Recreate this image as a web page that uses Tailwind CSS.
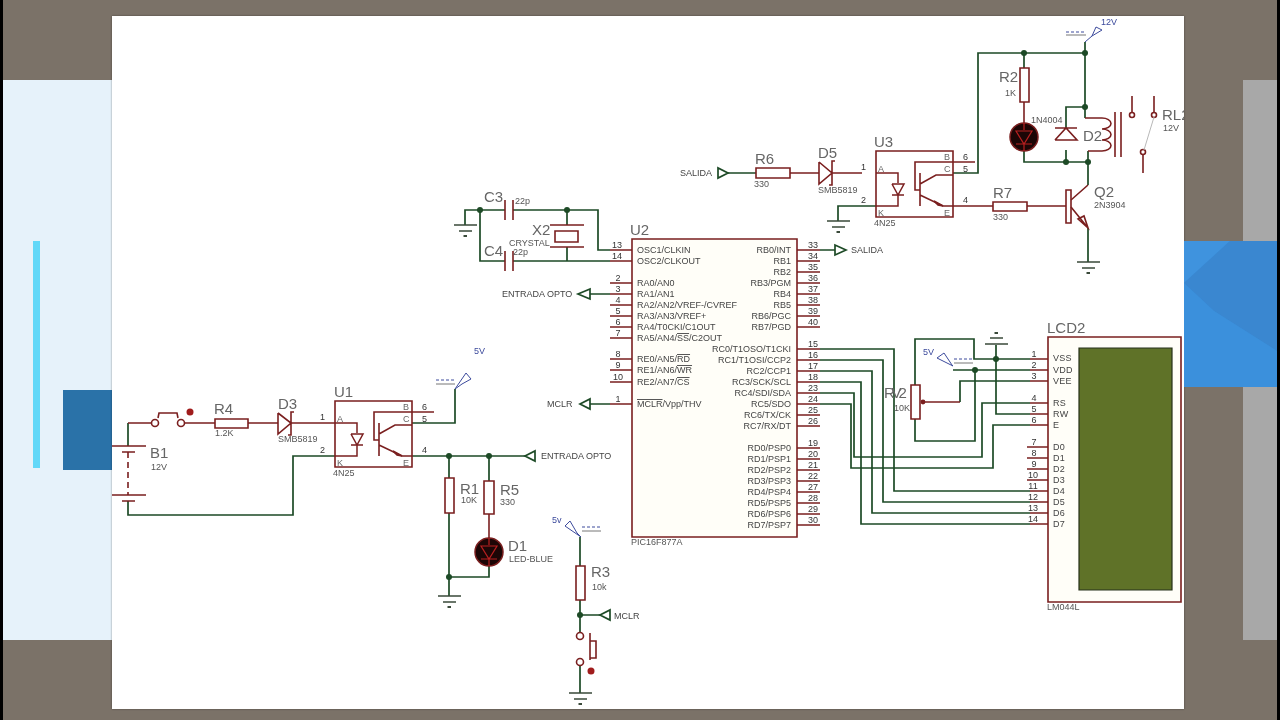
<!DOCTYPE html>
<html lang="en">
<head>
  <meta charset="UTF-8" />
  <title>PIC16F877A schematic</title>
  <script src="https://cdn.jsdelivr.net/npm/@tailwindcss/browser@4"></script>
</head>
<body class="bg-[#7b7268]">
<div class="w-[1280px] h-[720px] flex overflow-hidden bg-[#7b7268] font-['Liberation_Sans',Arial,sans-serif]">

  <div class="w-[3px] bg-black"></div>

  <!-- left slide strip -->
  <div class="w-[109px] my-[80px] bg-[#e6f2fa] flex items-start pl-[30px] pt-[161px]">
    <div class="w-[7px] h-[227px] bg-[#62d8f8]"></div>
    <div class="w-[49px] h-[80px] ml-[23px] mt-[149px] bg-[#2a72a8]"></div>
  </div>

  <!-- sheet -->
  <div class="w-[1072px] h-[693px] mt-[16px] bg-white shadow-[0_0_2px_rgba(0,0,0,0.4)]">
    <svg class="w-[1072px] h-[693px] blur-[0.35px]" viewBox="112 16 1072 693" fill="none">
      <defs>
        <g id="gnd" stroke="#3a4a3a" stroke-width="1.6">
          <path d="M-11 0H12M-6 6H7"/>
          <path d="M-1.500 11H2" stroke-width="2"/>
        </g>
        <circle id="dot" r="3" fill="#1d4a26"/>
        <g id="led">
          <circle r="14" fill="#1c0606" stroke="#7a1f1f" stroke-width="1.500"/>
          <path d="M0 -14V-7M0 7V14M-8 7H8M-8 -6H8L0 7Z" stroke="#b82020" stroke-width="1.200"/>
        </g>
        <g id="opto">
          <path d="M876 151H953V217H876Z" stroke="#7a1f1f" stroke-width="1.600"/>
          <path d="M876 173H898V183M898 195V206H876M892 195H904M892 184H904L898 195L892 184" stroke="#7a1f1f" stroke-width="1.500"/>
          <path d="M953 162H915V190H920M920 173V206M920 184L936 175H953M920 195L943 206H953" stroke="#7a1f1f" stroke-width="1.600"/>
          <path d="M934 201L943 206L938 205Z" stroke="#7a1f1f" stroke-width="1.500"/>
          <path d="M953 162H975" stroke="#7a1f1f" stroke-width="1.500"/>
          <g class="text-[9px] fill-[#666]">
            <text x="944" y="160">B</text><text x="944" y="172">C</text><text x="944" y="216">E</text>
            <text x="878" y="172">A</text><text x="878" y="216">K</text>
          </g>
          <g class="text-[9px] fill-[#333]">
            <text x="861" y="170">1</text><text x="861" y="203">2</text>
            <text x="963" y="160">6</text><text x="963" y="172">5</text><text x="963" y="203">4</text>
          </g>
        </g>
      </defs>

      <!-- green wires -->
      <g stroke="#1d4a26" stroke-width="1.700">
        <path d="M1085 42V118M1085 53H978V173H953M1024 53V68M1024 151V162H1088M1066 162V150M1066 128V107H1085M1088 151V185M1088 228V262"/>
        <path d="M728 173H756M838 221V206H876"/>
        <path d="M465 225V210H505M480 210V261H505M513 210H598V250H610M513 261H610M567 210V225M567 247V261"/>
        <path d="M590 294H610M590 404H610M820 250H836"/>
        <path d="M128 423V446M128 501V515H293V456H335M412 423H455V389M412 456H525M449 456V478M489 456V481M449 513V596M489 566V577H449"/>
        <path d="M580 537V566M580 600V632M580 615H600M580 666V693"/>
        <path d="M820 349H894V491H1030M820 360H883V502H1030M820 371H872V513H1030M820 382H861V524H1030"/>
        <path d="M820 393H854V457H982V403H1030M820 404H851V468H993V425H1030"/>
        <path d="M915 385V339H974V359H1030M996 345V414H1030M975 370V441H915V419M953 370H1030M960 402V381H1030"/>
      </g>

      <!-- maroon pins and parts -->
      <g stroke="#7a1f1f" stroke-width="1.600">
        <!-- U2 pins -->
        <path d="M610 250H632M610 261H632M610 283H632M610 294H632M610 305H632M610 316H632M610 327H632M610 338H632M610 359H632M610 370H632M610 382H632M610 404H632"/>
        <path d="M797 250H820M797 261H820M797 272H820M797 283H820M797 294H820M797 305H820M797 316H820M797 327H820"/>
        <path d="M797 349H820M797 360H820M797 371H820M797 382H820M797 393H820M797 404H820M797 415H820M797 426H820"/>
        <path d="M797 448H820M797 459H820M797 470H820M797 481H820M797 492H820M797 503H820M797 514H820M797 525H820"/>
        <path d="M632 239H797V537H632Z" fill="#fffef8"/>
        <!-- R6, D5 -->
        <path d="M790 173H819M832 173H862M819 162V184L832 173L819 162M835 161H832V185H829"/>
        <path d="M756 168H790V178H756Z"/>
        <!-- R2 and R7, R4 and the others -->
        <path d="M1020 68H1029V102H1020Z"/>
        <path d="M1024 102V123"/>
        <path d="M993 202H1027V211H993Z"/>
        <path d="M953 206H993M1027 206H1066"/>
        <path d="M1066 190H1071V223H1066Z"/>
        <path d="M1071 200L1088 185M1071 207L1088 228M1078 219L1088 228L1084 216Z"/>
        <path d="M1055 140H1077L1066 128L1055 140M1055 128H1077"/>
        <path d="M1085 118H1102a9 5.500 0 0 1 0 11a9 5.500 0 0 1 0 11a9 5.500 0 0 1 0 11H1088"/>
        <path d="M1115 112V157M1121 112V157M1132 96V112M1154 96V112M1143 155V173"/>
        <circle cx="1132" cy="115" r="2.500"/><circle cx="1154" cy="115" r="2.500"/><circle cx="1143" cy="152" r="2.500"/>
        <!-- left side -->
        <path d="M128 423H152M184 423H215M248 423H278M291 423H335"/>
        <circle cx="155" cy="423" r="3.500"/><circle cx="181" cy="423" r="3.500"/>
        <path d="M158 418L159 413H177L178 418"/>
        <path d="M215 419H248V428H215Z"/>
        <path d="M278 413V434L291 423L278 413M294 412H291V435H288"/>
        <path d="M112 446H146M122 452H135M112 495H146M122 501H135"/>
        <path d="M128 452V495" stroke-dasharray="6 4"/>
        <path d="M445 478H454V513H445Z" fill="#fff"/>
        <path d="M484 481H494V514H484Z" fill="#fff"/>
        <path d="M489 514V538"/>
        <path d="M576 566H585V600H576Z" fill="#fff"/>
        <circle cx="580" cy="636" r="3.500"/><circle cx="580" cy="662" r="3.500"/>
        <path d="M590 633V660M590 641H596V658H590"/>
        <!-- caps and crystal -->
        <path d="M505 200V220M513 200V220M505 251V271M513 251V271"/>
        <path d="M550 225H584M550 247H584M555 231H578V242H555Z"/>
        <!-- pot -->
        <path d="M911 385H920V419H911Z" fill="#fff"/>
        <path d="M921 402H960"/>
        <circle cx="923" cy="402" r="1.600" fill="#7a1f1f"/>
        <!-- LCD pins -->
        <path d="M1030 359H1048M1030 370H1048M1030 381H1048M1030 403H1048M1030 414H1048M1030 425H1048M1027 447H1048M1027 458H1048M1027 469H1048M1027 480H1048M1030 491H1048M1030 502H1048M1030 513H1048M1030 524H1048"/>
        <path d="M1048 337H1181V602H1048Z" fill="#fffef8"/>
      </g>
      <path d="M1154 117L1144 150" stroke="#b8b8b8"/>
      <path d="M1079 348H1172V590H1079Z" fill="#5f7228" stroke="#26301a" stroke-width="1.200"/>

      <!-- terminals -->
      <g stroke="#1d4a26" stroke-width="1.700" fill="#fff">
        <path d="M718 168V178L728 173Z"/>
        <path d="M835 245V255L846 250Z"/>
        <path d="M590 289V299L578 294Z"/>
        <path d="M590 399V409L580 404Z"/>
        <path d="M535 451V461L525 456Z"/>
        <path d="M610 610V620L600 615Z"/>
      </g>

      <!-- power probes -->
      <g stroke="#3c4a9c" fill="#fff">
        <path d="M1085 42L1092 36M1092 36L1102 30L1096 27Z"/>
        <path d="M455 389L462 384L471 379L466 373Z"/>
        <path d="M581 537L577 533L570 521L565 526Z"/>
        <path d="M953 366L952 365L944 353L937 358Z"/>
      </g>
      <g stroke="#3c4a9c" stroke-dasharray="3 2">
        <path d="M1066 32H1086M436 380H455M582 527H601M954 359H973"/>
      </g>
      <g stroke="#777">
        <path d="M1066 35H1086M436 384H455M582 531H601M954 363H973"/>
      </g>

      <!-- reused parts -->
      <use href="#opto"/>
      <use href="#opto" transform="translate(-541 250)"/>
      <use href="#led" x="1024" y="137"/>
      <use href="#led" x="489" y="552"/>
      <use href="#gnd" x="838" y="221"/>
      <use href="#gnd" x="1088" y="262"/>
      <use href="#gnd" x="465" y="225"/>
      <use href="#gnd" x="449" y="596"/>
      <use href="#gnd" x="580" y="693"/>
      <use href="#gnd" transform="translate(996 344) scale(1 -1)"/>

      <use href="#dot" x="1024" y="53"/><use href="#dot" x="1085" y="53"/><use href="#dot" x="1085" y="107"/>
      <use href="#dot" x="1066" y="162"/><use href="#dot" x="1088" y="162"/>
      <use href="#dot" x="480" y="210"/><use href="#dot" x="567" y="210"/>
      <use href="#dot" x="449" y="456"/><use href="#dot" x="489" y="456"/><use href="#dot" x="449" y="577"/>
      <use href="#dot" x="580" y="615"/><use href="#dot" x="996" y="359"/><use href="#dot" x="975" y="370"/>

      <circle cx="190" cy="412" r="3.500" fill="#a01c1c"/>
      <circle cx="591" cy="671" r="3.500" fill="#a01c1c"/>

      <!-- part names -->
      <g class="text-[15px] fill-[#666]">
        <text x="630" y="235">U2</text><text x="874" y="147">U3</text><text x="334" y="397">U1</text>
        <text x="755" y="164">R6</text><text x="818" y="158">D5</text><text x="999" y="82">R2</text>
        <text x="1083" y="141">D2</text><text x="1162" y="120">RL2</text><text x="993" y="198">R7</text>
        <text x="1094" y="197">Q2</text><text x="484" y="202">C3</text><text x="484" y="256">C4</text>
        <text x="532" y="235">X2</text><text x="214" y="414">R4</text><text x="278" y="409">D3</text>
        <text x="150" y="458">B1</text><text x="460" y="494">R1</text><text x="500" y="495">R5</text>
        <text x="508" y="551">D1</text><text x="591" y="577">R3</text>
        <text class="tracking-[-3px]" x="884" y="398">RV2</text>
        <text x="1047" y="333">LCD2</text>
      </g>

      <!-- part values -->
      <g class="text-[9px] fill-[#555]">
        <text x="754" y="187">330</text><text x="818" y="193">SMB5819</text><text x="1005" y="96">1K</text>
        <text x="1031" y="123">1N4004</text><text x="1163" y="131">12V</text><text x="993" y="220">330</text>
        <text x="1094" y="208">2N3904</text><text x="874" y="226">4N25</text><text x="515" y="204">22p</text>
        <text x="513" y="255">22p</text><text x="509" y="246">CRYSTAL</text><text x="215" y="436">1.2K</text>
        <text x="278" y="442">SMB5819</text><text x="333" y="476">4N25</text><text x="151" y="470">12V</text>
        <text x="461" y="503">10K</text><text x="500" y="505">330</text><text x="509" y="562">LED-BLUE</text>
        <text x="592" y="590">10k</text><text x="894" y="411">10K</text><text x="631" y="545">PIC16F877A</text>
        <text x="1047" y="610">LM044L</text>
      </g>

      <!-- terminal names -->
      <g class="text-[9px] fill-[#444]">
        <text x="680" y="176">SALIDA</text><text x="851" y="253">SALIDA</text>
        <text x="502" y="297">ENTRADA OPTO</text><text x="541" y="459">ENTRADA OPTO</text>
        <text x="547" y="407">MCLR</text><text x="614" y="619">MCLR</text>
      </g>
      <g class="text-[9px] fill-[#3c4a9c]">
        <text x="1101" y="25">12V</text><text x="474" y="354">5V</text><text x="552" y="523">5v</text><text x="923" y="355">5V</text>
      </g>

      <!-- U2 left labels -->
      <g class="text-[9px] fill-[#444]">
        <text x="637" y="253">OSC1/CLKIN</text><text x="637" y="264">OSC2/CLKOUT</text>
        <text x="637" y="286">RA0/AN0</text><text x="637" y="297">RA1/AN1</text>
        <text x="637" y="308">RA2/AN2/VREF-/CVREF</text><text x="637" y="319">RA3/AN3/VREF+</text>
        <text x="637" y="330">RA4/T0CKI/C1OUT</text>
        <text x="637" y="341">RA5/AN4/<tspan text-decoration="overline">SS</tspan>/C2OUT</text>
        <text x="637" y="362">RE0/AN5/<tspan text-decoration="overline">RD</tspan></text>
        <text x="637" y="373">RE1/AN6/<tspan text-decoration="overline">WR</tspan></text>
        <text x="637" y="385">RE2/AN7/<tspan text-decoration="overline">CS</tspan></text>
        <text x="637" y="407"><tspan text-decoration="overline">MCLR</tspan>/Vpp/THV</text>
      </g>

      <!-- U2 right labels -->
      <g class="text-[9px] fill-[#444]" text-anchor="end">
        <text x="791" y="253">RB0/INT</text><text x="791" y="264">RB1</text><text x="791" y="275">RB2</text>
        <text x="791" y="286">RB3/PGM</text><text x="791" y="297">RB4</text><text x="791" y="308">RB5</text>
        <text x="791" y="319">RB6/PGC</text><text x="791" y="330">RB7/PGD</text>
        <text x="791" y="352">RC0/T1OSO/T1CKI</text><text x="791" y="363">RC1/T1OSI/CCP2</text>
        <text x="791" y="374">RC2/CCP1</text><text x="791" y="385">RC3/SCK/SCL</text>
        <text x="791" y="396">RC4/SDI/SDA</text><text x="791" y="407">RC5/SDO</text>
        <text x="791" y="418">RC6/TX/CK</text><text x="791" y="429">RC7/RX/DT</text>
        <text x="791" y="451">RD0/PSP0</text><text x="791" y="462">RD1/PSP1</text>
        <text x="791" y="473">RD2/PSP2</text><text x="791" y="484">RD3/PSP3</text>
        <text x="791" y="495">RD4/PSP4</text><text x="791" y="506">RD5/PSP5</text>
        <text x="791" y="517">RD6/PSP6</text><text x="791" y="528">RD7/PSP7</text>
      </g>

      <!-- U2 pin numbers -->
      <g class="text-[9px] fill-[#333]" text-anchor="middle">
        <text x="617" y="248">13</text><text x="617" y="259">14</text><text x="618" y="281">2</text>
        <text x="618" y="292">3</text><text x="618" y="303">4</text><text x="618" y="314">5</text>
        <text x="618" y="325">6</text><text x="618" y="336">7</text><text x="618" y="357">8</text>
        <text x="618" y="368">9</text><text x="618" y="380">10</text><text x="618" y="402">1</text>
        <text x="813" y="248">33</text><text x="813" y="259">34</text><text x="813" y="270">35</text>
        <text x="813" y="281">36</text><text x="813" y="292">37</text><text x="813" y="303">38</text>
        <text x="813" y="314">39</text><text x="813" y="325">40</text>
        <text x="813" y="347">15</text><text x="813" y="358">16</text><text x="813" y="369">17</text>
        <text x="813" y="380">18</text><text x="813" y="391">23</text><text x="813" y="402">24</text>
        <text x="813" y="413">25</text><text x="813" y="424">26</text>
        <text x="813" y="446">19</text><text x="813" y="457">20</text><text x="813" y="468">21</text>
        <text x="813" y="479">22</text><text x="813" y="490">27</text><text x="813" y="501">28</text>
        <text x="813" y="512">29</text><text x="813" y="523">30</text>
      </g>

      <!-- LCD labels -->
      <g class="text-[9px] fill-[#444] tracking-[0.3px]">
        <text x="1053" y="361">VSS</text><text x="1053" y="373">VDD</text><text x="1053" y="384">VEE</text>
        <text x="1053" y="406">RS</text><text x="1053" y="417">RW</text><text x="1053" y="428">E</text>
        <text x="1053" y="450">D0</text><text x="1053" y="461">D1</text><text x="1053" y="472">D2</text>
        <text x="1053" y="483">D3</text><text x="1053" y="494">D4</text><text x="1053" y="505">D5</text>
        <text x="1053" y="516">D6</text><text x="1053" y="527">D7</text>
      </g>
      <g class="text-[9px] fill-[#333]" text-anchor="middle">
        <text x="1034" y="357">1</text><text x="1034" y="368">2</text><text x="1034" y="379">3</text>
        <text x="1034" y="401">4</text><text x="1034" y="412">5</text><text x="1034" y="423">6</text>
        <text x="1034" y="445">7</text><text x="1034" y="456">8</text><text x="1034" y="467">9</text>
        <text x="1033" y="478">10</text><text x="1033" y="489">11</text><text x="1033" y="500">12</text>
        <text x="1033" y="511">13</text><text x="1033" y="522">14</text>
      </g>
    </svg>
  </div>

  <!-- right slide strip -->
  <div class="w-[93px] relative">
    <div class="w-[34px] h-[560px] ml-[59px] mt-[80px] bg-[#a8a8a8]"></div>
    <svg class="absolute left-0 top-[241px] w-[93px] h-[146px]" viewBox="0 0 93 146">
      <rect width="93" height="146" fill="#3a8cd6"/>
      <path d="M0 0H46L0 42Z" fill="#3f93de"/>
      <path d="M46 0H93V110L30 70L0 42Z" fill="#3a87d0"/>
      <path d="M0 42L30 70L93 110V146H0Z" fill="#3b90dc"/>
    </svg>
  </div>

  <div class="w-[3px] bg-black"></div>
</div>
</body>
</html>
